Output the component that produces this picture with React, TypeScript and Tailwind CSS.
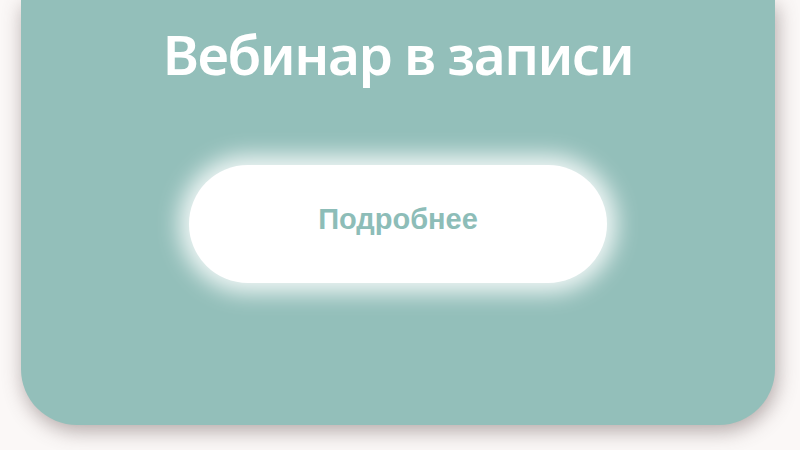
export default function App() {
  return (
    <div className="w-[800px] h-[450px] overflow-hidden bg-[#fbf8f7]">
      <div className="ml-[21px] w-[754px] h-[425px] rounded-b-[56px] bg-[#93bfba] shadow-[2px_6px_20px_rgba(90,70,70,0.45)] flex flex-col items-center">
        <h1
          className="mt-[19px] text-white text-[55px] leading-[70px] font-semibold tracking-[-1.5px]"
          style={{ fontFamily: '"Noto Sans", sans-serif' }}
        >
          Вебинар в записи
        </h1>
        <button
          className="mt-[76px] w-[418px] h-[118px] pb-2 rounded-full bg-white text-[#8dbdb8] text-[29px] font-bold shadow-[0_0_22px_10px_rgba(255,255,255,0.85)]"
          style={{ fontFamily: '"Liberation Sans", Arial, sans-serif' }}
        >
          Подробнее
        </button>
      </div>
    </div>
  );
}
